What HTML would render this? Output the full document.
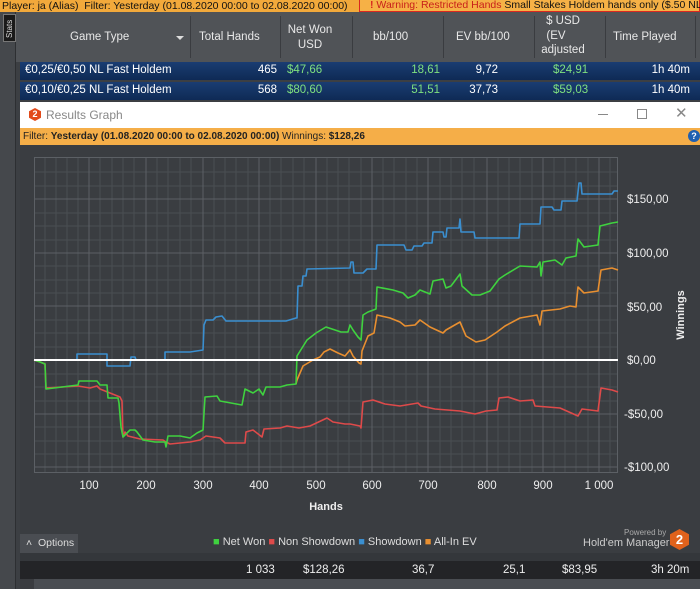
<!DOCTYPE html>
<html><head><meta charset="utf-8"><style>
*{margin:0;padding:0;box-sizing:border-box}
body{width:700px;height:589px;overflow:hidden;background:#3c3f43;font-family:"Liberation Sans",sans-serif;font-size:11px;position:relative}
.a{position:absolute;white-space:nowrap}
.hd{color:#e8e8e8;font-size:11.5px;text-align:center}
.row{position:absolute;left:20px;width:680px;height:18px;background:linear-gradient(#1a3d72,#0e2a55);color:#fff;font-size:11.5px}
.row span{position:absolute;top:2px}
.r{text-align:right}
.g{color:#7fe07f}
.bd{position:absolute;top:16px;width:1px;height:42px;background:#3a3c40}
</style></head><body>
<!-- top bar -->
<div class="a" style="left:0;top:0;width:359px;height:12px;background:#f2a93b;font-size:10.5px;line-height:12px;color:#111;padding-left:2px">Player: ja (Alias) &nbsp;Filter: Yesterday (01.08.2020 00:00 to 02.08.2020 00:00)</div>
<div class="a" style="left:359px;top:0;width:341px;height:12px;background:#f6b146;border:1px solid #d9281f;border-top:none;font-size:10.5px;line-height:11px;color:#111;padding-left:10px"><span style="color:#d9281f;font-weight:bold">! </span><span style="color:#c8201a">Warning: Restricted Hands</span> Small Stakes Holdem hands only ($.50 NL, $1 L</div>
<!-- header -->
<div class="a" style="left:0;top:12px;width:700px;height:50px;background:#505357"></div>
<div class="a" style="left:0;top:12px;width:16px;height:577px;background:#45484c;border-right:1px solid #2d2f32"></div>
<div class="a" style="left:3px;top:14px;width:13px;height:28px;background:#1a1a1a;border:1px solid #777"></div>
<div class="a" style="left:5px;top:38px;color:#ddd;font-size:8px;transform:rotate(-90deg);transform-origin:0 0">Stats</div>
<div class="bd" style="left:190px"></div>
<div class="bd" style="left:280px"></div>
<div class="bd" style="left:352px"></div>
<div class="bd" style="left:443px"></div>
<div class="bd" style="left:534px"></div>
<div class="bd" style="left:605px"></div>
<div class="bd" style="left:695px"></div>
<div class="a hd" style="left:70px;top:31px">Game Type</div>
<div class="a" style="left:176px;top:36px;border-left:4px solid transparent;border-right:4px solid transparent;border-top:4px solid #ddd"></div>
<div class="a hd" style="left:199px;top:31px">Total Hands</div>
<div class="a hd" style="left:286px;top:23px;width:48px;line-height:15px">Net Won<br>USD</div>
<div class="a hd" style="left:373px;top:31px">bb/100</div>
<div class="a hd" style="left:456px;top:31px">EV bb/100</div>
<div class="a hd" style="left:540px;top:14px;width:46px;line-height:14.5px">$ USD<br><span style="margin-left:-14px">(EV</span><br>adjusted</div>
<div class="a hd" style="left:613px;top:31px">Time Played</div>
<!-- rows -->
<div class="row" style="top:62px"><span style="left:5px">€0,25/€0,50 NL Fast Holdem</span><span class="r" style="right:423px">465</span><span class="g" style="left:267px">$47,66</span><span class="g r" style="right:260px">18,61</span><span class="r" style="right:202px">9,72</span><span class="g" style="left:533px">$24,91</span><span class="r" style="right:10px">1h 40m</span></div>
<div class="row" style="top:82px"><span style="left:5px">€0,10/€0,25 NL Fast Holdem</span><span class="r" style="right:423px">568</span><span class="g" style="left:267px">$80,60</span><span class="g r" style="right:260px">51,51</span><span class="r" style="right:202px">37,73</span><span class="g" style="left:533px">$59,03</span><span class="r" style="right:10px">1h 40m</span></div>
<!-- window -->
<div class="a" style="left:20px;top:102px;width:680px;height:26px;background:#fff"></div>
<div class="a" style="left:29px;top:108px;width:12px;height:13px;background:#e24a1a;clip-path:polygon(50% 0,100% 25%,100% 75%,50% 100%,0 75%,0 25%);color:#fff;font-size:9px;font-weight:bold;text-align:center;line-height:13px">2</div>
<div class="a" style="left:46px;top:108px;color:#888;font-size:12px">Results Graph</div>
<div class="a" style="left:598px;top:114px;width:10px;height:1px;background:#888"></div>
<div class="a" style="left:637px;top:109px;width:10px;height:10px;border:1px solid #888"></div>
<div class="a" style="left:675px;top:104px;color:#888;font-size:15px">✕</div>
<div class="a" style="left:20px;top:128px;width:680px;height:17px;background:#f5ae48;font-size:10px;line-height:17px;color:#222;padding-left:3px">Filter: <b>Yesterday (01.08.2020 00:00 to 02.08.2020 00:00)</b> Winnings: <b>$128,26</b></div>
<div class="a" style="left:688px;top:130px;width:12px;height:12px;border-radius:6px;background:#2060b0;color:#fff;font-size:9px;text-align:center;line-height:12px;font-weight:bold">?</div>
<div class="a" style="left:20px;top:145px;width:680px;height:408px;background:#3a3d41"></div>
<svg class="a" style="left:0;top:0" width="700" height="589" font-family="Liberation Sans">
<g stroke="#4a4e53" stroke-width="1">
<path d="M34 172H618M34 186H618M34 213H618M34 226H618M34 240H618M34 266H618M34 280H618M34 293H618M34 320H618M34 333H618M34 347H618M34 374H618M34 387H618M34 401H618M34 427H618M34 441H618M34 454H618"/>
<path d="M45 157V472M56 157V472M67 157V472M78 157V472M100 157V472M112 157V472M123 157V472M134 157V472M157 157V472M168 157V472M180 157V472M191 157V472M214 157V472M225 157V472M236 157V472M248 157V472M270 157V472M281 157V472M293 157V472M304 157V472M327 157V472M338 157V472M349 157V472M361 157V472M383 157V472M394 157V472M406 157V472M417 157V472M440 157V472M451 157V472M462 157V472M474 157V472M498 157V472M509 157V472M520 157V472M532 157V472M554 157V472M565 157V472M576 157V472M588 157V472M610 157V472"/>
</g>
<g stroke="#5c6065" stroke-width="1">
<path d="M34 199H618M34 253H618M34 306H618M34 414H618M34 467H618"/>
<path d="M89 157V472M146 157V472M203 157V472M259 157V472M316 157V472M372 157V472M428 157V472M487 157V472M543 157V472M599 157V472"/>
</g>
<rect x="34.5" y="157.5" width="583" height="315" fill="none" stroke="#5c6065"/>
<g fill="none" stroke-width="1.6" stroke-linejoin="round">
<polyline stroke="#3a8fd0" points="34,360 77,360 77,354 107,354 107,366 130,366 131,357 135,357 136,360 165,360 165,352 190,352 203,350 204,325 206,320 213,320 216,317 222,316 226,321 286,321 296,318 297,318 298,286 302,286 303,276 306,276 307,269 350,268 351,262 353,262 354,273 363,273 367,269 376,269 377,245 404,245 406,250 412,250 414,246 422,246 424,243 432,243 433,232 443,232 444,237 446,237 447,228 459,228 460,219 461,232 474,232 475,238 519,238 520,224 540,224 541,207 552,207 554,210 561,210 562,201 568,201 577,201 579,183 581,183 582,194 612,194 614,191 618,191"/>
<polyline stroke="#de4a4a" points="34,360 40,362 45,364 46,388 78,386 90,388 97,386 100,389 110,393 120,397 122,401 123,437 125,432 128,436 140,439 163,440 166,442 170,444 180,443 190,442 200,440 206,436 220,438 225,443 245,443 246,432 253,430 262,437 264,429 280,428 287,426 299,428 310,426 327,418 333,422 345,424 350,424 360,426 361,428 363,402 373,400 385,404 400,406 418,403 421,406 435,409 460,411 475,414 486,411 497,410 499,398 508,397 520,401 533,400 535,406 560,408 578,416 582,409 598,411 601,388 612,390 618,392"/>
<polyline stroke="#e88f30" points="296,384 297,380 303,366 313,360 320,357 324,352 330,349 338,353 345,356 350,350 353,356 359,363 361,364 362,351 368,336 374,333 377,315 390,318 400,322 405,326 415,325 420,320 430,327 443,333 446,330 460,322 466,336 476,342 485,340 497,332 505,326 520,318 537,315 540,325 542,311 560,309 570,306 576,307 578,287 584,293 598,291 601,270 612,268 618,270"/>
<polyline stroke="#3fd23f" points="34,360 40,362 45,364 46,389 78,385 79,381 97,381 100,385 107,385 108,398 118,398 119,403 121,427 123,437 130,430 135,430 137,432 143,440 155,442 165,442 166,447 168,436 180,436 190,438 197,433 203,430 205,397 217,396 220,401 242,405 245,389 253,393 259,389 263,395 266,387 280,387 287,385 296,384 297,356 307,340 316,333 326,327 335,330 341,332 348,332 350,325 353,330 358,337 361,340 363,315 368,312 376,309 377,287 393,290 403,293 408,298 415,295 420,290 430,294 433,281 443,279 446,288 451,286 460,274 462,286 472,295 480,295 490,291 499,279 505,275 520,266 537,267 540,262 541,276 543,262 555,260 562,265 566,258 576,256 578,239 584,247 598,245 600,226 612,223 618,222"/>
</g>
<line x1="34" y1="360" x2="618" y2="360" stroke="#fff" stroke-width="2"/>
<g fill="#eee" font-size="11.5">
<text x="627" y="203">$150,00</text><text x="627" y="257">$100,00</text><text x="627" y="311">$50,00</text><text x="627" y="364">$0,00</text><text x="624" y="418">-$50,00</text><text x="624" y="471">-$100,00</text>
<g text-anchor="middle"><text x="89" y="489">100</text><text x="146" y="489">200</text><text x="203" y="489">300</text><text x="259" y="489">400</text><text x="316" y="489">500</text><text x="372" y="489">600</text><text x="428" y="489">700</text><text x="487" y="489">800</text><text x="543" y="489">900</text><text x="599" y="489">1 000</text>
<text x="326" y="510" font-weight="bold" font-size="11">Hands</text></g>
<text x="0" y="0" font-weight="bold" font-size="11" transform="translate(684,315) rotate(-90)" text-anchor="middle">Winnings</text>
</g>
</svg>
<!-- options/legend -->
<div class="a" style="left:20px;top:534px;width:58px;height:19px;background:#4a4d52;color:#ddd;font-size:10.5px;line-height:19px;padding-left:6px">˄ &nbsp;Options</div>
<div class="a" style="left:213px;top:536px;color:#ddd;font-size:11px"><span style="color:#3fd23f">■</span> Net Won <span style="color:#de4a4a">■</span> Non Showdown <span style="color:#3a8fd0">■</span> Showdown <span style="color:#e88f30">■</span> All-In EV</div>
<div class="a" style="left:624px;top:528px;color:#aaa;font-size:8px">Powered by</div>
<div class="a" style="left:583px;top:537px;color:#ccc;font-size:11px">Hold'em Manager</div>
<div class="a" style="left:670px;top:529px;width:19px;height:21px;background:#e0621c;clip-path:polygon(50% 0,100% 25%,100% 75%,50% 100%,0 75%,0 25%);color:#fff;font-size:13px;font-weight:bold;text-align:center;line-height:21px">2</div>
<div class="a" style="left:20px;top:553px;width:680px;height:8px;background:#34373b"></div>
<div class="a" style="left:20px;top:561px;width:680px;height:18px;background:#232427;color:#eee;font-size:11.5px">
<span class="a" style="left:226px;top:3px">1 033</span><span class="a" style="left:283px;top:3px">$128,26</span><span class="a" style="left:392px;top:3px">36,7</span><span class="a" style="left:483px;top:3px">25,1</span><span class="a" style="left:542px;top:3px">$83,95</span><span class="a" style="left:631px;top:3px">3h 20m</span></div>
<div class="a" style="left:20px;top:579px;width:680px;height:10px;background:#4a4d52"></div>
<div class="a" style="left:20px;top:579px;width:14px;height:10px;background:#3a3c40"></div>
</body></html>
